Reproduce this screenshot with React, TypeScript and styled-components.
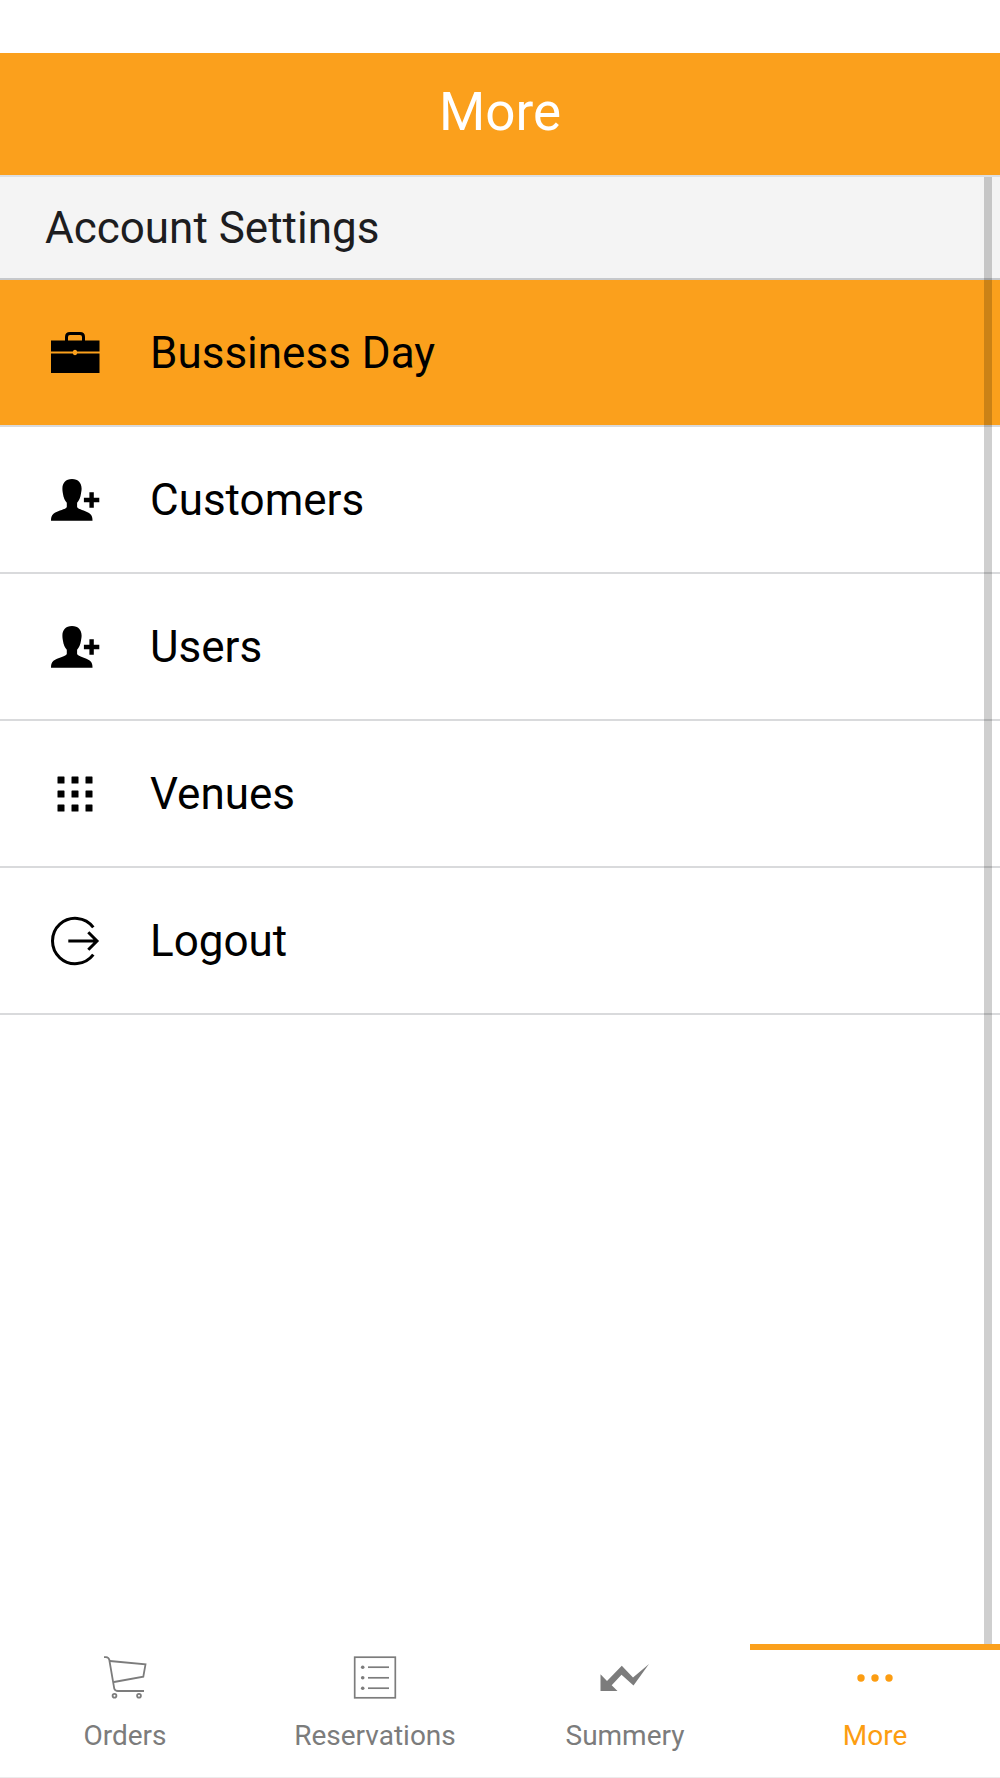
import React, { useState } from "react";
import styled, { createGlobalStyle } from "styled-components";

const orange = "#fba01c";
const grey = "#7c7c7c";

const GlobalStyle = createGlobalStyle`
  *, *::before, *::after { box-sizing: border-box; }
  body {
    margin: 0;
    background: #fff;
    color: #000;
    font-family: Roboto, "Noto Sans", sans-serif;
  }
`;

const Screen = styled.div`
  display: flex;
  flex-direction: column;
  min-height: 100vh;
  padding-top: 53px;
`;

const Header = styled.header`
  display: flex;
  justify-content: center;
  padding: 27px 16px 31px;
  background: ${orange};
  border-bottom: 2px solid #dcdfe3;
`;

const Title = styled.h1`
  margin: 0;
  color: #fff;
  font-size: 53px;
  font-weight: 400;
  line-height: 64px;
`;

const Content = styled.main`
  position: relative;
  flex: 1;
`;

const ScrollThumb = styled.div`
  position: absolute;
  top: 0;
  right: 8px;
  bottom: 0;
  width: 8px;
  background: rgba(0, 0, 0, 0.19);
  pointer-events: none;
`;

const SectionTitle = styled.h2`
  margin: 0;
  padding: 26px 45px 25px;
  background: #f4f4f4;
  border-bottom: 2px solid #c6c8cb;
  color: #1d1d1f;
  font-size: 44px;
  font-weight: 400;
  line-height: 50px;
`;

const Menu = styled.ul`
  margin: 0;
  padding: 0;
  list-style: none;
`;

const MenuButton = styled.button<{ $selected: boolean }>`
  display: flex;
  align-items: center;
  gap: 50px;
  width: 100%;
  padding: 48px 50px 47px;
  border: 0;
  border-bottom: 2px solid #d9dadc;
  background: ${(p) => (p.$selected ? orange : "#fff")};
  color: #000;
  font: inherit;
  font-size: 44px;
  line-height: 50px;
  text-align: left;
  cursor: pointer;
`;

const Icon = styled.svg`
  display: block;
  flex: none;
  width: 50px;
  height: 50px;
`;

const TabBar = styled.nav`
  display: grid;
  grid-template-columns: repeat(4, 1fr);
  border-bottom: 1px solid #ececec;
`;

const Tab = styled.a<{ $active: boolean }>`
  display: flex;
  flex-direction: column;
  align-items: center;
  gap: 17px;
  padding: 3px 0 25px;
  border-top: 6px solid ${(p) => (p.$active ? orange : "transparent")};
  color: ${(p) => (p.$active ? "#fc9d12" : grey)};
  font-size: 28px;
  line-height: 32px;
  text-decoration: none;
`;

const BriefcaseIcon = () => (
  <Icon viewBox="0 0 50 50" aria-hidden="true">
    <path d="M16.5 13V9q0-3.500 3.500-3.500h10q3.500 0 3.500 3.500v4" fill="none" stroke="currentColor" strokeWidth="3" />
    <path d="M1 12.500h48.500v11H27.200a2.300 2.300 0 0 0-4.400 0H1zM1 25.500h21.800a2.300 2.300 0 0 0 4.400 0h22.300V45H1z" fill="currentColor" />
  </Icon>
);

const PersonAddIcon = () => (
  <Icon viewBox="0 0 50 50" aria-hidden="true">
    <path
      d="M22 4c-6.400 0-9.600 4.200-9.600 9.500 0 2 .2 3.300.5 5 .6 4.500 2 7 3.900 9.200v4.200c-1.300 2.800-9.300 3.600-13.300 6.800C1.300 40.500 1 43 1 45.700h41.500c0-2.700-.3-5.200-2.500-7-4-3.200-11.600-4-12.900-6.800v-4.200c1.900-2.200 3.300-4.700 3.900-9.200.3-1.700.6-3 .6-5C31.600 8.200 28.400 4 22 4z"
      fill="currentColor"
    />
    <path d="M39.400 17.300h4.400v5.500h5.500v4.400h-5.500v5.500h-4.400v-5.500h-5.500v-4.400h5.500z" fill="currentColor" />
  </Icon>
);

const GridIcon = () => (
  <Icon viewBox="0 0 50 50" aria-hidden="true">
    {[11, 25, 39].map((y) =>
      [11, 25, 39].map((x) => (
        <rect key={`${x}-${y}`} x={x - 3.5} y={y - 3.5} width="7" height="7" rx="0.6" fill="currentColor" />
      ))
    )}
  </Icon>
);

const LogoutIcon = () => (
  <Icon viewBox="0 0 50 50" aria-hidden="true" fill="none" stroke="currentColor" strokeWidth="3">
    <path d="M43.300 11.300A22.700 22.700 0 1 0 43.300 38.700" />
    <path d="M18.300 25H47M38.300 16.200L47 25L38.300 33.800" />
  </Icon>
);

const CartIcon = () => (
  <Icon viewBox="0 0 50 50" aria-hidden="true" fill="none" stroke="currentColor" strokeWidth="1.800">
    <path d="M4 4.200h2q2.600.2 3.300 2.600l5 29Q15 38 18 38H44" />
    <path d="M9.800 8L45.500 11.300L43.300 23.700L14 29" />
    <circle cx="14.500" cy="42.800" r="1.900" />
    <circle cx="39" cy="42.800" r="1.900" />
  </Icon>
);

const ListIcon = () => (
  <Icon viewBox="0 0 50 50" aria-hidden="true" fill="none" stroke="currentColor" strokeWidth="1.700">
    <rect x="4.700" y="4.200" width="40.600" height="40.600" />
    {[14.2, 24.8, 35.2].map((y) => (
      <g key={y}>
        <circle cx="12.700" cy={y} r="1.800" fill="currentColor" stroke="none" />
        <path d={`M18 ${y}H39`} />
      </g>
    ))}
  </Icon>
);

const TrendIcon = () => (
  <Icon viewBox="0 0 50 50" aria-hidden="true">
    <path d="M.5 21.300L7 28L21.800 12.700L33 24.500L49 11L33.500 32.400L21.500 21.800L11.700 32.300L17.500 38H.5z" fill="currentColor" />
  </Icon>
);

const DotsIcon = () => (
  <Icon viewBox="0 0 50 50" aria-hidden="true" fill="currentColor">
    {[11, 25, 39].map((x) => (
      <circle key={x} cx={x} cy="25" r="3.700" />
    ))}
  </Icon>
);

const items = [
  { label: "Bussiness Day", Glyph: BriefcaseIcon },
  { label: "Customers", Glyph: PersonAddIcon },
  { label: "Users", Glyph: PersonAddIcon },
  { label: "Venues", Glyph: GridIcon },
  { label: "Logout", Glyph: LogoutIcon },
];

const tabs = [
  { label: "Orders", href: "#orders", Glyph: CartIcon },
  { label: "Reservations", href: "#reservations", Glyph: ListIcon },
  { label: "Summery", href: "#summery", Glyph: TrendIcon },
  { label: "More", href: "#more", Glyph: DotsIcon },
];

export default function App() {
  const [selected, setSelected] = useState("Bussiness Day");
  const [tab, setTab] = useState("More");

  return (
    <>
      <GlobalStyle />
      <Screen>
        <Header>
          <Title>More</Title>
        </Header>
        <Content>
          <SectionTitle>Account Settings</SectionTitle>
          <Menu>
            {items.map(({ label, Glyph }) => (
              <li key={label}>
                <MenuButton type="button" $selected={selected === label} onClick={() => setSelected(label)}>
                  <Glyph />
                  {label}
                </MenuButton>
              </li>
            ))}
          </Menu>
          <ScrollThumb />
        </Content>
        <TabBar>
          {tabs.map(({ label, href, Glyph }) => (
            <Tab
              key={label}
              href={href}
              $active={tab === label}
              aria-current={tab === label ? "page" : undefined}
              onClick={() => setTab(label)}
            >
              <Glyph />
              {label}
            </Tab>
          ))}
        </TabBar>
      </Screen>
    </>
  );
}
